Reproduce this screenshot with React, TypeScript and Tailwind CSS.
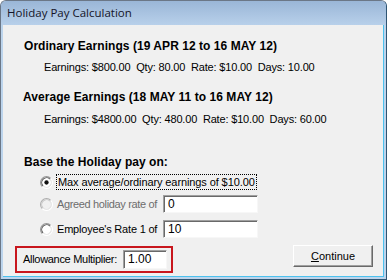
import React from "react"

const body = { fontFamily: '"Liberation Sans", Arial, sans-serif' }

function Radio({ checked = false, disabled = false }: { checked?: boolean; disabled?: boolean }) {
  return (
    <svg width="13" height="13" viewBox="0 0 12 12" className="shrink-0">
      <circle cx="6" cy="6" r="5" fill={disabled ? "#f0f0f0" : "#ffffff"} />
      <path d="M2.11 9.89 A5.5 5.5 0 0 1 9.89 2.11" fill="none" stroke={disabled ? "#b0b0b0" : "#9a9a9a"} strokeWidth="1" />
      <path d="M9.89 2.11 A5.5 5.5 0 0 1 2.11 9.89" fill="none" stroke="#ffffff" strokeWidth="1" />
      <path d="M2.82 9.18 A4.5 4.5 0 0 1 9.18 2.82" fill="none" stroke={disabled ? "#c8c8c8" : "#5a5a5a"} strokeWidth="1" />
      <path d="M9.18 2.82 A4.5 4.5 0 0 1 2.82 9.18" fill="none" stroke="#e3e3e3" strokeWidth="1" />
      {checked && <circle cx="6" cy="6" r="2" fill="#111111" />}
    </svg>
  )
}

function TextBox({ value, className }: { value: string; className: string }) {
  return (
    <div
      className={`shrink-0 bg-white border border-t-[#a0a0a0] border-l-[#a0a0a0] border-r-[#f7f7f7] border-b-[#f7f7f7] shadow-[inset_1px_1px_0_#696969] pl-[4px] text-[12px] leading-[16px] text-black ${className}`}
    >
      {value}
    </div>
  )
}

export default function App() {
  return (
    <div className="w-[387px] h-[280px] bg-white overflow-hidden" style={body}>
      <div className="h-full flex flex-col rounded-t-[6px] border border-[#6b7787] border-r-[#2f5573] border-b-[#2f5573] bg-[#bcd4ec] overflow-hidden">
        <div className="h-[24px] shrink-0 bg-gradient-to-b from-[#9ab6d7] to-[#b8d0ea] flex items-center pl-[6px]">
          <span className="text-[11.5px] text-[#141428]" style={{ fontFamily: '"Open Sans", "Noto Sans", sans-serif' }}>
            Holiday Pay Calculation
          </span>
        </div>
        <div className="flex-1 flex flex-col mx-[2px] mb-[2px] border-r border-b border-r-[#4cc2ef] border-b-[#4cc2ef]">
          <div className="flex-1 flex flex-col bg-[#f0f0f0] text-black">
            <div className="pl-[21px] mt-[14px] text-[12px] font-bold leading-[14px] tracking-[0.05px] whitespace-nowrap">
              Ordinary Earnings (19 APR 12 to 16 MAY 12)
            </div>
            <div className="pl-[41px] mt-[7px] text-[11px] leading-[14px] tracking-[-0.17px] whitespace-pre">
              Earnings: $800.00  Qty: 80.00  Rate: $10.00  Days: 10.00
            </div>
            <div className="pl-[20px] mt-[16px] text-[12px] font-bold leading-[14px] tracking-[0.05px] whitespace-nowrap">
              Average Earnings (18 MAY 11 to 16 MAY 12)
            </div>
            <div className="pl-[41px] mt-[8px] text-[11px] leading-[14px] tracking-[-0.17px] whitespace-pre">
              Earnings: $4800.00  Qty: 480.00  Rate: $10.00  Days: 60.00
            </div>
            <div className="pl-[21px] mt-[29px] text-[12px] font-bold leading-[14px] tracking-[0.05px] whitespace-nowrap">
              Base the Holiday pay on:
            </div>

            <div className="flex items-center h-[18px] mt-[4px] pl-[37px] text-[11px] whitespace-nowrap">
              <Radio checked />
              <span className="ml-[3px] px-[1px] border border-dotted border-black leading-[14px] tracking-[-0.1px]">
                Max average/ordinary earnings of $10.00
              </span>
            </div>
            <div className="flex items-center h-[18px] mt-[4px] pl-[37px] text-[11px] whitespace-nowrap">
              <Radio disabled />
              <span className="ml-[4px] text-[#6d6d6d] w-[106px] shrink-0 tracking-[-0.35px]">Agreed holiday rate of</span>
              <TextBox value="0" className="w-[95px] h-[18px]" />
            </div>
            <div className="flex items-center h-[18px] mt-[7px] pl-[37px] text-[11px] whitespace-nowrap">
              <Radio />
              <span className="ml-[4px] w-[106px] shrink-0 tracking-[-0.2px]">Employee's Rate 1 of</span>
              <TextBox value="10" className="w-[95px] h-[18px]" />
            </div>

            <div className="flex items-start mt-[7px] pl-[12px] pr-[10px]">
              <div className="flex items-center h-[27px] border-2 border-[#c8161d] pl-[6px] pr-[4px] mt-[1px] text-[11px] whitespace-nowrap">
                <span className="w-[100px] shrink-0 tracking-[-0.3px]">Allowance Multiplier:</span>
                <TextBox value="1.00" className="w-[44px] h-[19px]" />
              </div>
              <div className="flex-1" />
              <button className="w-[80px] h-[22px] bg-[#f0f0f0] border border-t-[#ffffff] border-l-[#ffffff] border-r-[#696969] border-b-[#696969] shadow-[inset_-1px_-1px_0_#a0a0a0] text-[11px] text-black">
                <span className="underline">C</span>ontinue
              </button>
            </div>
          </div>
        </div>
      </div>
    </div>
  )
}
